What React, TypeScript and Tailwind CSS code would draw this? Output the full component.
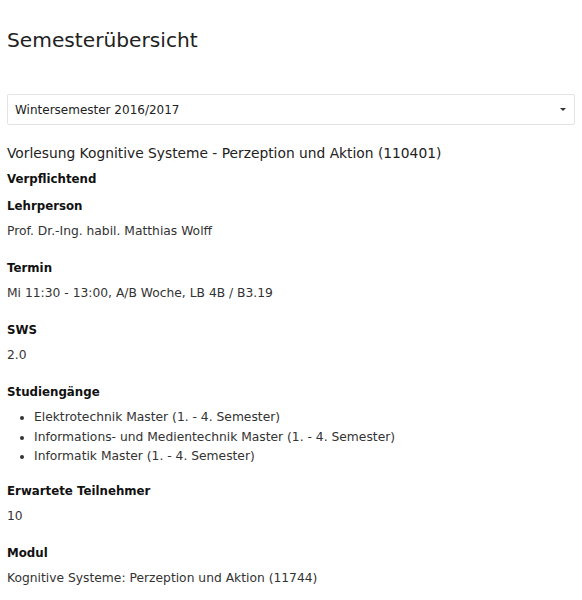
import { useState } from 'react';

const semesters = ['Wintersemester 2016/2017', 'Sommersemester 2016', 'Wintersemester 2015/2016'];

const studiengaenge = [
  'Elektrotechnik Master (1. - 4. Semester)',
  'Informations- und Medientechnik Master (1. - 4. Semester)',
  'Informatik Master (1. - 4. Semester)',
];

function Field({ label, children }: { label: string; children: React.ReactNode }) {
  return (
    <div className="mb-[11px]">
      <div className="text-[11.8px] font-bold leading-[26px] text-[#111]">{label}</div>
      <div className="leading-[25px]">{children}</div>
    </div>
  );
}

export default function App() {
  const [semester, setSemester] = useState(semesters[0]);

  return (
    <div className="min-h-[600px] bg-white px-[7px] text-[12.3px] text-[#333]" style={{ fontFamily: '"DejaVu Sans", Verdana, sans-serif' }}>
      <h1 className="pt-[26px] text-[20.2px] leading-[28px] text-[#222]">Semesterübersicht</h1>
      <div className="relative mt-[40px]">
        <select
          className="h-[31px] w-full appearance-none rounded-[2px] border border-[#e3e3e3] bg-white pl-[7px] text-[12px] text-[#222] outline-none"
          value={semester}
          onChange={(e) => setSemester(e.target.value)}
        >
          {semesters.map((s) => (
            <option key={s}>{s}</option>
          ))}
        </select>
        <span className="pointer-events-none absolute right-[9px] top-[14px] h-0 w-0 border-x-[3px] border-t-[3px] border-x-transparent border-t-[#333]" />
      </div>
      <div className="mt-[15px] text-[13.8px] leading-[26px] text-[#222]">Vorlesung Kognitive Systeme - Perzeption und Aktion (110401)</div>
      <div className="text-[11.8px] font-bold leading-[27px] text-[#111]">Verpflichtend</div>
      <Field label="Lehrperson">Prof. Dr.-Ing. habil. Matthias Wolff</Field>
      <Field label="Termin">Mi 11:30 - 13:00, A/B Woche, LB 4B / B3.19</Field>
      <Field label="SWS">2.0</Field>
      <div className="mb-[11px]">
        <div className="text-[11.8px] font-bold leading-[26px] text-[#111]">Studiengänge</div>
        <ul className="mt-[3px] list-disc pl-[27px] leading-[19.5px]">
          {studiengaenge.map((s) => (
            <li key={s}>{s}</li>
          ))}
        </ul>
      </div>
      <Field label="Erwartete Teilnehmer">10</Field>
      <Field label="Modul">Kognitive Systeme: Perzeption und Aktion (11744)</Field>
    </div>
  );
}
